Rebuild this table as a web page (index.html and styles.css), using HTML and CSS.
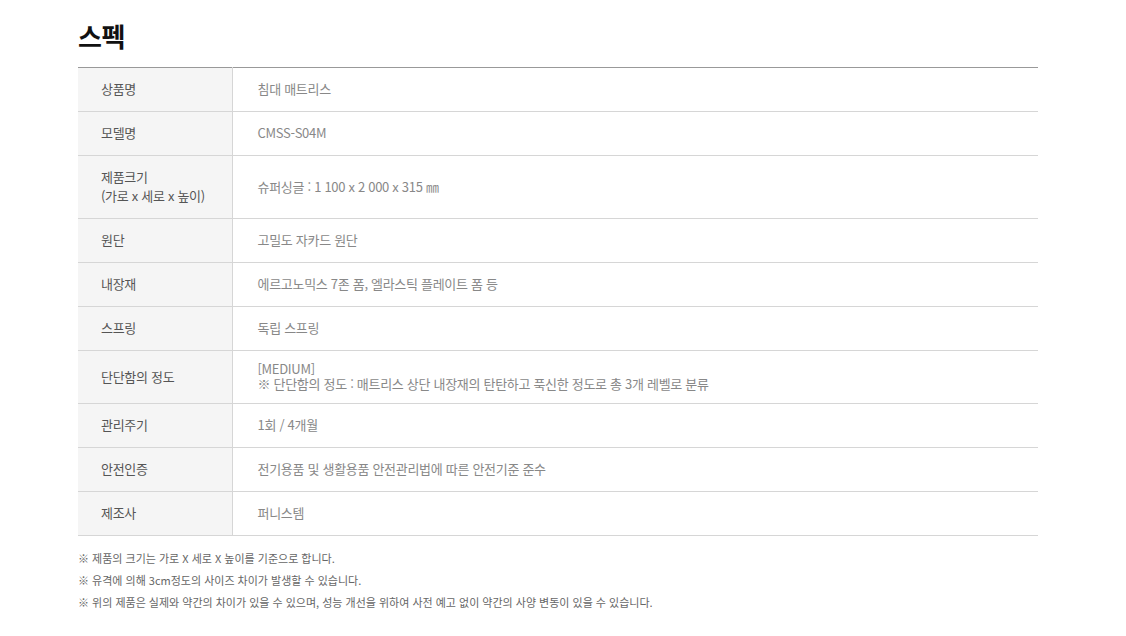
FILE: index.html
```html
<!DOCTYPE html>
<html lang="ko">
<head>
<meta charset="utf-8">
<link rel="stylesheet" href="styles.css">
</head>
<body>
<div class="wrap">
  <h2 class="title">스펙</h2>
  <table class="spec">
    <tr><th>상품명</th><td>침대 매트리스</td></tr>
    <tr><th>모델명</th><td>CMSS-S04M</td></tr>
    <tr><th>제품크기<br>(가로 x 세로 x 높이)</th><td>슈퍼싱글 : 1 100 x 2 000 x 315 ㎜</td></tr>
    <tr><th>원단</th><td>고밀도 자카드 원단</td></tr>
    <tr><th>내장재</th><td>에르고노믹스 7존 폼, 엘라스틱 플레이트 폼 등</td></tr>
    <tr><th>스프링</th><td>독립 스프링</td></tr>
    <tr><th>단단함의 정도</th><td>[MEDIUM]<br>※ 단단함의 정도 : 매트리스 상단 내장재의 탄탄하고 푹신한 정도로 총 3개 레벨로 분류</td></tr>
    <tr><th>관리주기</th><td>1회 / 4개월</td></tr>
    <tr><th>안전인증</th><td>전기용품 및 생활용품 안전관리법에 따른 안전기준 준수</td></tr>
    <tr><th>제조사</th><td>퍼니스템</td></tr>
  </table>
  <ul class="notes">
    <li>※ 제품의 크기는 가로 X 세로 X 높이를 기준으로 합니다.</li>
    <li>※ 유격에 의해 3cm정도의 사이즈 차이가 발생할 수 있습니다.</li>
    <li>※ 위의 제품은 실제와 약간의 차이가 있을 수 있으며, 성능 개선을 위하여 사전 예고 없이 약간의 사양 변동이 있을 수 있습니다.</li>
  </ul>
</div>
</body>
</html>
```
FILE: styles.css
```css
html, body {
  margin: 0;
  padding: 0;
  background: #fff;
}
body {
  font-family: "Noto Sans CJK KR", "Noto Sans", sans-serif;
  color: #333;
}
.wrap {
  width: 960px;
  margin: 0 0 0 78px;
  padding-top: 17px;
}
.title {
  margin: 0;
  font-size: 26px;
  font-weight: 700;
  line-height: 38px;
  color: #111;
  letter-spacing: -0.5px;
}
.spec {
  width: 100%;
  margin-top: 12px;
  border-collapse: collapse;
  border-top: 1px solid #999;
  font-size: 13px;
  letter-spacing: -0.3px;
}
.spec th {
  width: 154px;
  box-sizing: border-box;
  background: #f5f5f5;
  color: #555;
  font-weight: 400;
  text-align: left;
  padding: 11px 10px 13px 23px;
  line-height: 19px;
  border-bottom: 1px solid #d6d6d6;
  border-right: 1px solid #d6d6d6;
  vertical-align: middle;
}
.spec td {
  color: #888;
  padding: 10px 20px 12px 25px;
  line-height: 15px;
  border-bottom: 1px solid #d6d6d6;
  vertical-align: middle;
}
.notes {
  list-style: none;
  margin: 11px 0 0;
  padding: 0;
  font-size: 11px;
  line-height: 22px;
  color: #666;
}
```
